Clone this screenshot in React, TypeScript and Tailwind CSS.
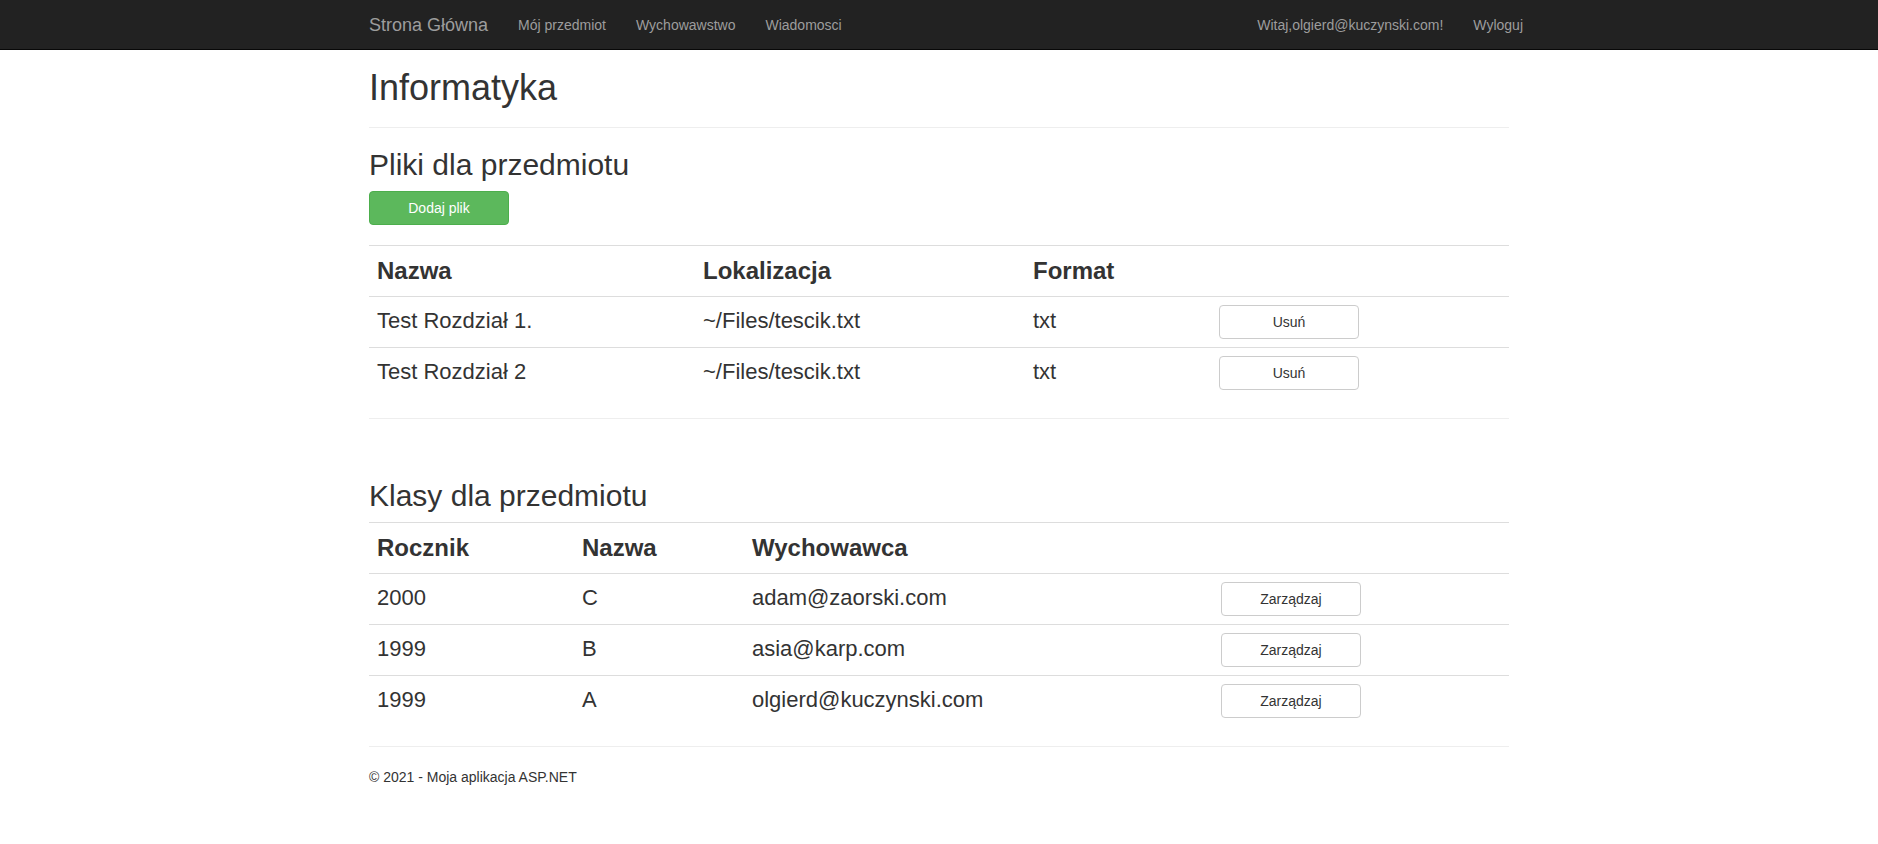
const files = [
  { name: "Test Rozdział 1.", path: "~/Files/tescik.txt", format: "txt" },
  { name: "Test Rozdział 2", path: "~/Files/tescik.txt", format: "txt" },
]

const classes = [
  { year: "2000", name: "C", teacher: "adam@zaorski.com" },
  { year: "1999", name: "B", teacher: "asia@karp.com" },
  { year: "1999", name: "A", teacher: "olgierd@kuczynski.com" },
]

const th = "border-t border-[#ddd] p-[8px] text-left align-top text-[24px] leading-[34px] font-bold"
const td = "border-t border-[#ddd] p-[8px] align-top text-[22px] leading-[31px]"
const btnDefault =
  "block h-[34px] w-[140px] rounded-[4px] border border-[#ccc] bg-white text-[14px] leading-[20px] text-[#333]"

export default function App() {
  return (
    <div className="min-h-screen bg-white font-['Liberation_Sans',Arial,sans-serif] text-[14px] leading-[20px] text-[#333]">
      <nav className="h-[50px] border-b border-[#080808] bg-[#222]">
        <div className="mx-auto flex w-[1170px] px-[15px]">
          <a href="#" className="-ml-[15px] p-[15px] text-[18px] leading-[20px] text-[#9d9d9d]">
            Strona Główna
          </a>
          <ul className="flex">
            {["Mój przedmiot", "Wychowawstwo", "Wiadomosci"].map((l) => (
              <li key={l}>
                <a href="#" className="block p-[15px] leading-[20px] text-[#9d9d9d]">
                  {l}
                </a>
              </li>
            ))}
          </ul>
          <ul className="-mr-[29px] ml-auto flex">
            <li>
              <a href="#" className="block p-[15px] leading-[20px] text-[#9d9d9d]">
                Witaj,olgierd@kuczynski.com!
              </a>
            </li>
            <li>
              <a href="#" className="block p-[15px] leading-[20px] text-[#9d9d9d]">
                Wyloguj
              </a>
            </li>
          </ul>
        </div>
      </nav>

      <div className="mx-auto w-[1170px] px-[15px]">
        <h1 className="mt-[18px] mb-[10px] text-[36px] leading-[39px] font-normal">Informatyka</h1>
        <hr className="my-[20px] border-[#eee]" />

        {/* files */}
        <h2 className="mt-[20px] mb-[10px] text-[30px] leading-[33px] font-normal">Pliki dla przedmiotu</h2>
        <button className="block h-[34px] w-[140px] rounded-[4px] border border-[#4cae4c] bg-[#5cb85c] text-[14px] leading-[20px] text-white">
          Dodaj plik
        </button>
        <table className="mt-[20px] w-full table-fixed border-collapse">
          <tbody>
            <tr>
              <th className={`${th} w-[326px]`}>Nazwa</th>
              <th className={`${th} w-[330px]`}>Lokalizacja</th>
              <th className={`${th} w-[186px]`}>Format</th>
              <th className={th}></th>
            </tr>
            {files.map((f) => (
              <tr key={f.name}>
                <td className={td}>{f.name}</td>
                <td className={td}>{f.path}</td>
                <td className={td}>{f.format}</td>
                <td className={td}>
                  <button className={btnDefault}>Usuń</button>
                </td>
              </tr>
            ))}
          </tbody>
        </table>
        <hr className="mt-[20px] border-[#eee]" />

        {/* classes */}
        <h2 className="mt-[60px] mb-[10px] text-[30px] leading-[33px] font-normal">Klasy dla przedmiotu</h2>
        <table className="w-full table-fixed border-collapse">
          <tbody>
            <tr>
              <th className={`${th} w-[205px]`}>Rocznik</th>
              <th className={`${th} w-[170px]`}>Nazwa</th>
              <th className={`${th} w-[469px]`}>Wychowawca</th>
              <th className={th}></th>
            </tr>
            {classes.map((c) => (
              <tr key={c.teacher}>
                <td className={td}>{c.year}</td>
                <td className={td}>{c.name}</td>
                <td className={td}>{c.teacher}</td>
                <td className={td}>
                  <button className={btnDefault}>Zarządzaj</button>
                </td>
              </tr>
            ))}
          </tbody>
        </table>
        <hr className="mt-[20px] mb-[20px] border-[#eee]" />

        <footer>
          <p className="mb-[10px]">&copy; 2021 - Moja aplikacja ASP.NET</p>
        </footer>
      </div>
    </div>
  )
}
